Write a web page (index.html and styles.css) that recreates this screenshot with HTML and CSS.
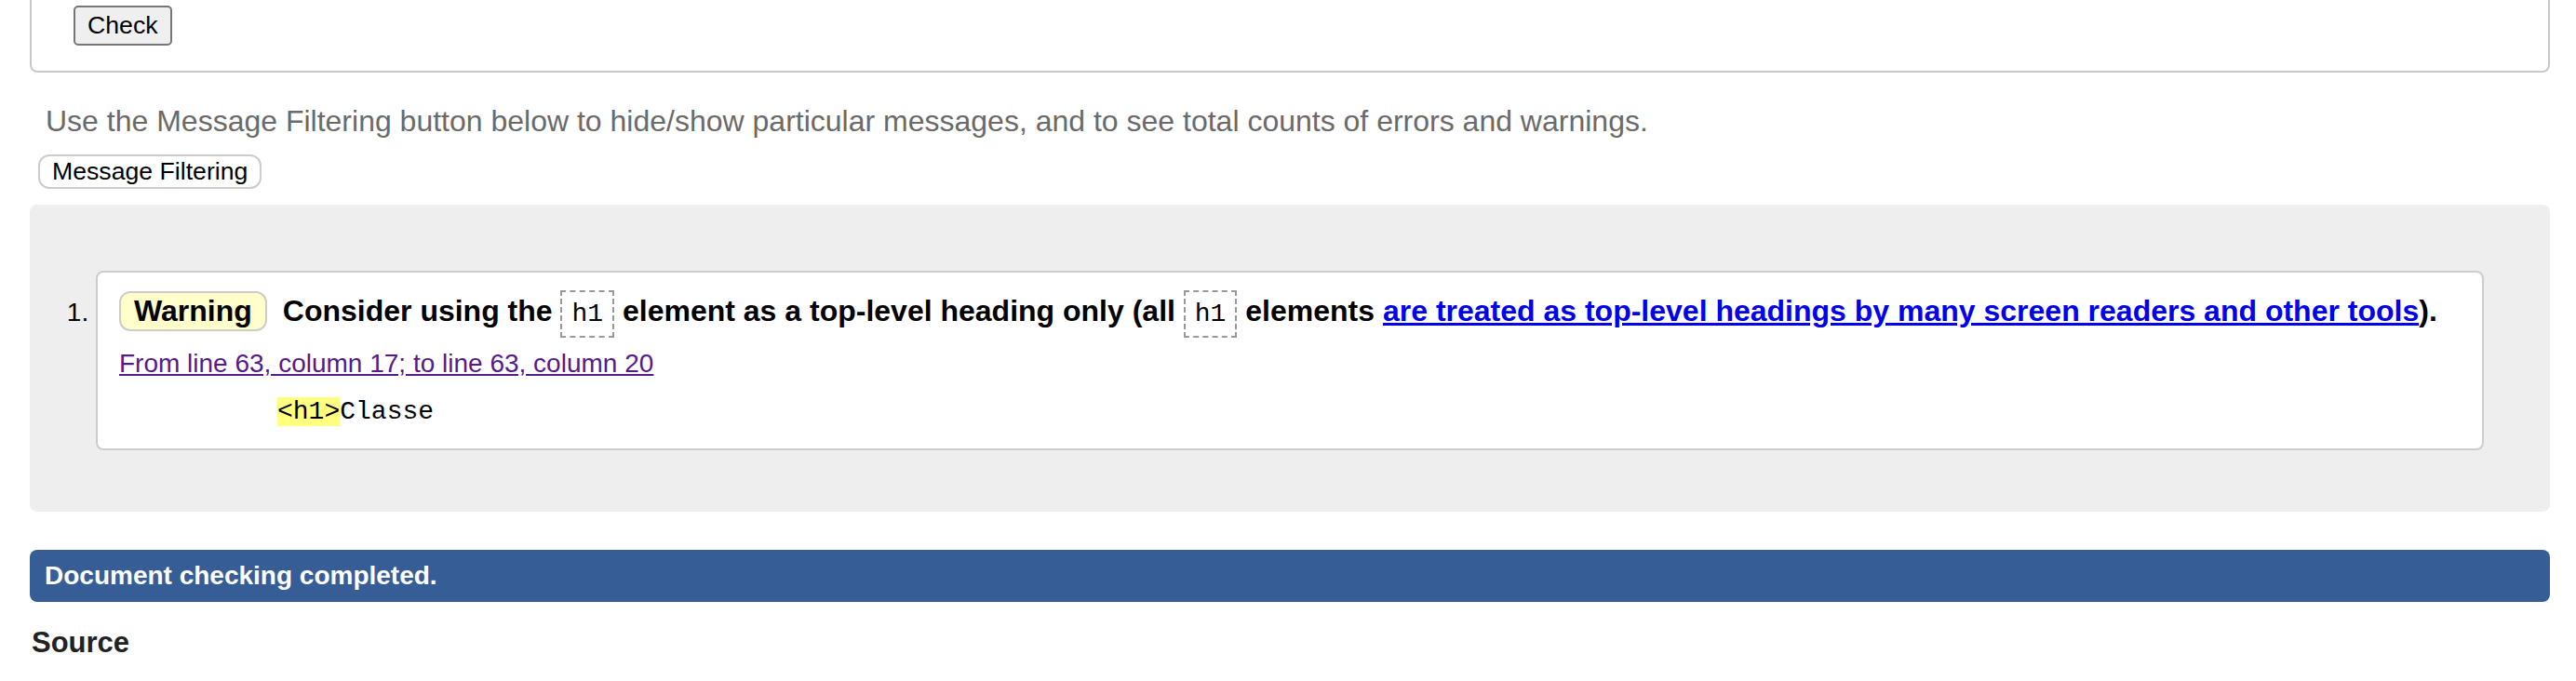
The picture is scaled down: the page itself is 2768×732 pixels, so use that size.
FILE: index.html
```html
<!DOCTYPE html>
<html lang="en">
<head>
<meta charset="utf-8">
<title>Nu Html Checker</title>
<link rel="stylesheet" href="styles.css">
</head>
<body>
<div class="page">
  <div class="form-box">
    <button class="check-btn" type="button">Check</button>
  </div>
  <p class="hint">Use the Message Filtering button below to hide/show particular messages, and to see total counts of errors and warnings.</p>
  <button class="filter-btn" type="button">Message Filtering</button>
  <div class="results">
    <ol class="messages">
      <li class="msg">
        <p class="msg-line"><strong class="badge">Warning</strong><span class="msg-text">Consider using the <code class="elem">h1</code> element as a top-level heading only (all <code class="elem">h1</code> elements <a class="ref" href="#">are treated as top-level headings by many screen readers and other tools</a>).</span></p>
        <p class="location"><a class="loc-link" href="#">From line 63, column 17; to line 63, column 20</a></p>
        <p class="extract"><code><b class="hl">&lt;h1&gt;</b>Classe</code></p>
      </li>
    </ol>
  </div>
  <p class="done">Document checking completed.</p>
  <h2 class="source">Source</h2>
</div>
</body>
</html>
```
FILE: styles.css
```css
html, body {
  margin: 0;
  padding: 0;
  background: #fff;
}
body {
  font-family: "Liberation Sans", Arial, sans-serif;
  font-size: 32px;
  color: #000;
  overflow: hidden;
}
.page {
  padding: 0 28px 0 32px;
}
.form-box {
  border: 2px solid #c8c8c8;
  border-top: none;
  border-radius: 0 0 8px 8px;
  height: 78px;
  box-sizing: border-box;
  padding: 6px 0 0 45px;
}
.check-btn {
  font-family: "Liberation Sans", Arial, sans-serif;
  font-size: 26.67px;
  height: 43px;
  padding: 0 13px;
  background: #efefef;
  border: 2px solid #767676;
  border-radius: 5px;
  color: #000;
}
.hint {
  margin: 34px 0 0 17px;
  line-height: 37px;
  color: #6a6a6a;
}
.filter-btn {
  display: block;
  margin: 17px 0 0 9px;
  font-family: "Liberation Sans", Arial, sans-serif;
  font-size: 26.67px;
  height: 37px;
  padding: 0 13px;
  background: #fff;
  border: 2px solid #ccc;
  border-radius: 12px;
  color: #000;
}
.results {
  margin-top: 17px;
  background: #eee;
  border-radius: 8px;
  padding: 71px 71px 66px 71px;
}
.messages {
  margin: 0;
  padding: 0;
  font-size: 28px;
}
.msg {
  background: #fff;
  border: 2px solid #ccc;
  border-radius: 8px;
  padding: 20px 24px 23px 23px;
}
.msg-line {
  margin: 0;
  font-size: 32px;
  font-weight: bold;
  line-height: 43px;
}
.badge {
  display: inline-block;
  box-sizing: border-box;
  height: 43px;
  line-height: 39px;
  padding: 0 14px;
  background: #ffffcc;
  border: 2px solid #ccc;
  border-radius: 12px;
  margin-right: 17px;
  vertical-align: top;
}
.elem {
  font-family: "Liberation Mono", "Courier New", monospace;
  font-weight: normal;
  font-size: 28px;
  line-height: 30px;
  border: 2px dashed #999;
  padding: 8px 10px;
}
.ref {
  color: #0000ee;
}
.location {
  margin: 19px 0 0 0;
  font-size: 28px;
  line-height: 32px;
}
.loc-link {
  color: #551a8b;
}
.extract {
  margin: 18px 0 0 170px;
  line-height: 32px;
}
.extract code {
  font-family: "Liberation Mono", "Courier New", monospace;
  font-size: 28px;
}
.hl {
  font-weight: normal;
  background: #ffff80;
}
.done {
  margin: 41px 0 0 0;
  background: #365d95;
  color: #fff;
  font-weight: bold;
  font-size: 28px;
  line-height: 56px;
  padding: 0 16px;
  border-radius: 8px;
}
.source {
  margin: 26px 0 0 2px;
  font-size: 31px;
  line-height: 36px;
  color: #222;
}
```
